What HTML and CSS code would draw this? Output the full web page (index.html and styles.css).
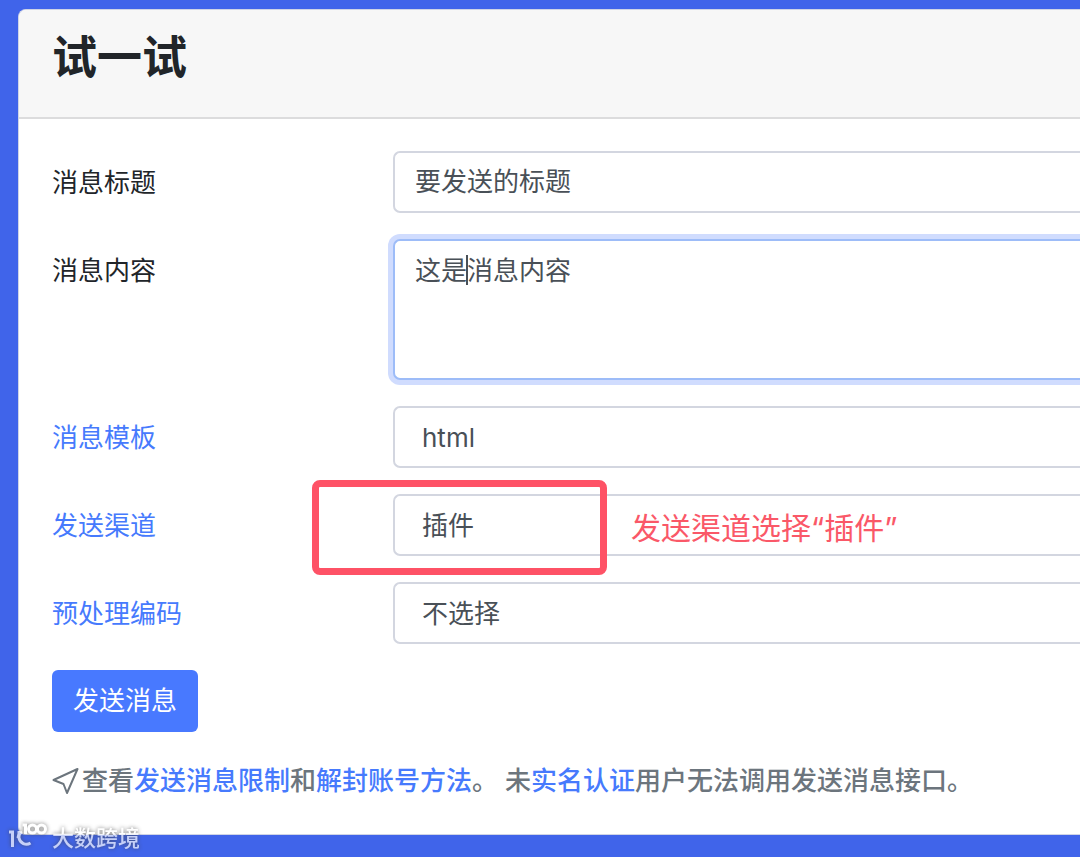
FILE: index.html
```html
<!DOCTYPE html>
<html lang="zh-CN">
  <head>
    <meta charset="UTF-8" />
    <meta name="viewport" content="width=device-width, initial-scale=1.0" />
    <title>试一试</title>
    <link rel="stylesheet" href="styles.css">
  </head>
  <body>
    <div class="card">
      <div class="card-header">
        <h1>试一试</h1>
      </div>
      <form class="card-body">
        <div class="form-row">
          <label for="title">消息标题</label>
          <input id="title" class="form-control" type="text" value="要发送的标题" />
        </div>
        <div class="form-row">
          <label for="content">消息内容</label>
          <div class="field">
            <textarea id="content" class="form-control active">这是消息内容</textarea>
            <span class="caret"></span>
          </div>
        </div>
        <div class="form-row">
          <label for="template"><a href="#">消息模板</a></label>
          <select id="template" class="form-control">
            <option>html</option>
          </select>
        </div>
        <div class="form-row">
          <label for="channel"><a href="#">发送渠道</a></label>
          <div class="field">
            <select id="channel" class="form-control">
              <option>插件</option>
            </select>
            <div class="mark-box"></div>
            <span class="mark-text">发送渠道选择“插件”</span>
          </div>
        </div>
        <div class="form-row">
          <label for="encode"><a href="#">预处理编码</a></label>
          <select id="encode" class="form-control">
            <option>不选择</option>
          </select>
        </div>
        <button class="btn" type="button">发送消息</button>
        <p class="tips">
          <svg class="send" viewBox="0 0 28 28">
            <path d="M1.5 13 25.5 2 15 26 11.5 17Z" />
          </svg>查看<a href="#">发送消息限制</a>和<a href="#">解封账号方法</a>。 未<a href="#">实名认证</a>用户无法调用发送消息接口。
        </p>
      </form>
    </div>
    <div class="watermark">
      <svg viewBox="0 0 40 30">
        <path d="M1 9H4.500V24" />
        <path d="M11 8V15A7.500 7.500 0 0 0 22.500 20" />
        <path d="M10 15A7.500 7.500 0 0 1 14 9" />
        <path d="M14.500 2H17.500V11" />
        <circle cx="24.500" cy="6" r="4" />
        <circle cx="33.500" cy="6" r="4" />
      </svg>
      <span>大数跨境</span>
    </div>
  </body>
</html>
```
FILE: styles.css
```css
* {
  box-sizing: border-box;
}
body {
  position: relative;
  margin: 0;
  padding: 9px 0 22px 18px;
  background: #4064ea;
  color: #212529;
  font-family: Inter, 'Noto Sans CJK SC', sans-serif;
  font-size: 26px;
  line-height: 38px;
}
a {
  color: #467afd;
  text-decoration: none;
}

/* Card */
.card {
  background: #fff;
  border: 1px solid #cfd4e6;
  border-right: 0;
  border-radius: 8px 0 0 8px;
  overflow: hidden;
}
.card-header {
  padding: 21px 33px 32px;
  background: #f7f7f7;
  border-bottom: 2px solid #dcdcdd;
}
h1 {
  margin: 0;
  font-size: 45px;
  font-weight: 700;
  line-height: 54px;
}
.card-body {
  display: flex;
  flex-direction: column;
  gap: 26px;
  padding: 32px 0 34px 33px;
}

/* Form */
.form-row {
  display: grid;
  grid-template-columns: 341px 1fr;
}
.form-row label {
  padding-top: 13px;
}
.field {
  position: relative;
  display: flex;
}
.form-control {
  display: block;
  width: 100%;
  height: 62px;
  margin: 0;
  padding: 6px 20px 12px;
  background: #fff;
  border: 2px solid #d3d6e0;
  border-right: 0;
  border-radius: 7px 0 0 7px;
  outline: none;
  color: #495057;
  font: inherit;
}
select.form-control {
  padding: 11px 20px 9px 27px;
  appearance: none;
}
textarea.form-control {
  height: 141px;
  padding: 11px 20px;
  resize: none;
}
.form-control.active {
  border-color: #9dbcf8;
  box-shadow: 0 0 0 5px #d0dcfe;
}
.caret {
  position: absolute;
  top: 16px;
  left: 73px;
  width: 2px;
  height: 30px;
  background: #495057;
}
.btn {
  align-self: flex-start;
  height: 62px;
  padding: 0 21px;
  background: #4879ff;
  border: 0;
  border-radius: 6px;
  color: #fff;
  font: inherit;
  cursor: pointer;
}

/* Red mark round the channel field */
.mark-box {
  position: absolute;
  top: -14px;
  left: -81px;
  width: 295px;
  height: 95px;
  border: 7px solid #fe5266;
  border-radius: 8px;
}
.mark-text {
  position: absolute;
  top: 15px;
  left: 238px;
  color: #fa5868;
  font-size: 30px;
}

/* Tips */
.tips {
  margin: 4px 0 0;
  color: #6c757d;
  font-weight: 500;
}
.send {
  width: 28px;
  height: 28px;
  margin: 0 2px 4px 0;
  vertical-align: middle;
  fill: none;
  stroke: #6c757d;
  stroke-width: 2;
  stroke-linejoin: round;
}

/* Watermark */
.watermark {
  position: absolute;
  bottom: 0;
  left: 8px;
  display: flex;
  align-items: center;
  gap: 4px;
  color: #fff;
  font-size: 22px;
  font-weight: 500;
  opacity: 0.7;
  filter: drop-shadow(0 0 2px #444);
}
.watermark svg {
  width: 40px;
  height: 30px;
  fill: none;
  stroke: #fff;
  stroke-width: 3;
}
```
